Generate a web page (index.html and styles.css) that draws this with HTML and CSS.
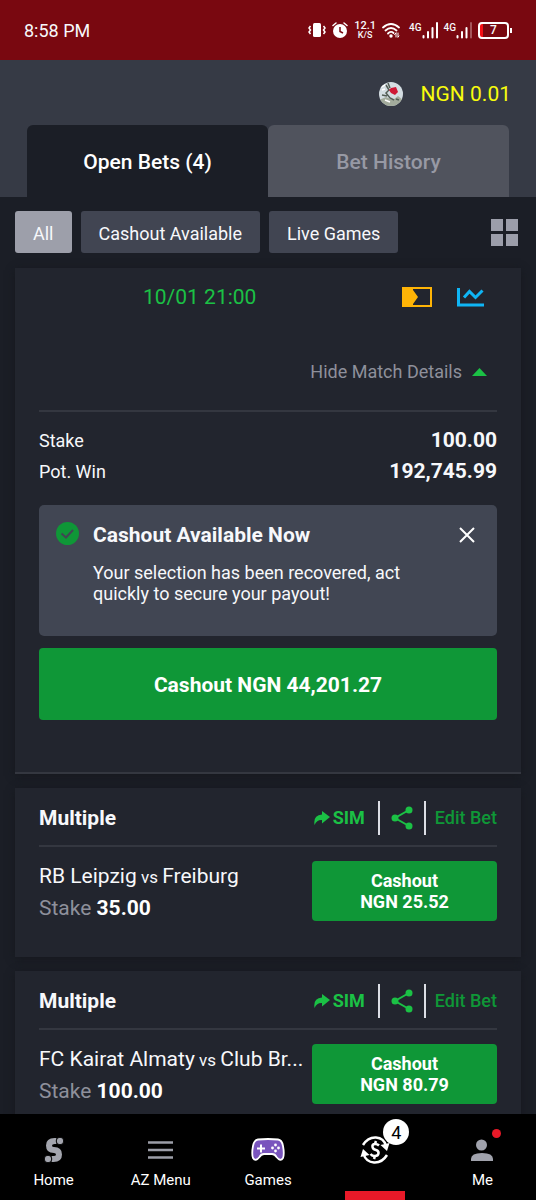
FILE: index.html
```html
<!DOCTYPE html>
<html lang="en">
<head>
<meta charset="utf-8">
<meta name="viewport" content="width=device-width, initial-scale=1">
<title>Open Bets</title>
<link rel="stylesheet" href="styles.css">
</head>
<body>
<svg class="defs" aria-hidden="true">
  <symbol id="forward" viewBox="0 0 16 14"><path d="M8 0l8 6-8 6.500V9Q3 8.500 .5 14Q-1 4 8 3.500z" fill="currentColor"/></symbol>
  <symbol id="share" viewBox="0 0 22 24"><path d="M18 4L4 12l14 8" fill="none" stroke="currentColor" stroke-width="2"/><g fill="currentColor"><circle cx="18" cy="4" r="3.500"/><circle cx="4" cy="12" r="3.500"/><circle cx="18" cy="20" r="3.500"/></g></symbol>
</svg>
<div class="app">
  <div class="status">
    <span class="clock">8:58 PM</span>
    <div class="indicators">
      <svg width="18" height="16" viewBox="0 0 18 16"><rect x="5" y="1" width="8" height="14" rx="1.500" fill="#fff"/><path d="M2.500 4L1 6l1.500 2L1 10l1.500 2M15.500 4L17 6l-1.500 2 1.500 2-1.500 2" fill="none" stroke="#fff" stroke-width="1.500"/></svg>
      <svg class="alarm" width="16" height="16" viewBox="0 0 16 16"><circle cx="8" cy="9" r="7" fill="#fff"/><path d="M8 5v4.500l3 1.500" fill="none" stroke="#790810" stroke-width="1.500"/><path d="M1 3.500L4 1M15 3.500L12 1" stroke="#fff" stroke-width="1.500" stroke-linecap="round"/></svg>
      <span class="speed"><b>12.1</b><small>K/S</small></span>
      <svg class="wifi" width="18" height="16" viewBox="0 0 18 16" fill="none" stroke="#fff" stroke-width="1.800" stroke-linecap="round"><path d="M1 5.500Q9-1.500 17 5.500M3.500 8.500Q9 3.500 14.500 8.500M6 11.500Q9 8.500 11.500 11"/><circle cx="9" cy="14" r=".8" fill="#fff"/><path d="M14 11v4M12.500 12.500L14 11M16 11v4M16 15l1-1" stroke-width="1"/></svg>
      <span class="signal"><span>4G</span><svg width="16" height="17" viewBox="0 0 16 17" stroke="#fff" stroke-width="2" stroke-linecap="round"><path d="M1.500 14v1.500M6 10v5.500M10.500 6v9.500M15 1v14.500"/></svg></span>
      <span class="signal"><span>4G</span><svg width="16" height="17" viewBox="0 0 16 17" stroke="#fff" stroke-width="2" stroke-linecap="round"><path d="M1.500 14v1.500M6 10v5.500M10.500 6v9.500"/><path d="M15 1v14.500" stroke="#a6565b"/></svg></span>
      <span class="battery">7</span>
    </div>
  </div>
  <header class="header">
    <div class="wallet">
      <svg width="24" height="24" viewBox="0 0 24 24"><clipPath id="av"><circle cx="12" cy="12" r="12"/></clipPath><g clip-path="url(#av)"><path fill="#d4dde2" d="M0 0h24v24H0z"/><path fill="#a3ab9c" d="M0 18l7-3 7 3 5-4 5 4v6H0z"/><path d="M7 3l3 5-3 3 4 5 4 2M9 1l2 5M3 13l5 1M17 17l3 1" fill="none" stroke="#535d55" stroke-width="1.500"/><path fill="#ce1835" d="M12 6l5-1 2 5-3 3-4-2-2-3z"/><path d="M2 5l4-2M3 8l3-1M6 18l5 2" stroke="#fff" stroke-width="1.500"/></g></svg>
      <span>NGN 0.01</span>
    </div>
    <div class="tabs">
      <button class="tab active">Open Bets (4)</button>
      <button class="tab">Bet History</button>
    </div>
  </header>
  <main class="content">
    <div class="filters">
      <button class="filter selected">All</button>
      <button class="filter">Cashout Available</button>
      <button class="filter">Live Games</button>
      <button class="plain layout" aria-label="Change layout"><svg width="27" height="27" viewBox="0 0 27 27" fill="#9c9eaa"><path d="M0 0h12v12H0zM15 0h12v12H15zM0 15h12v12H0zM15 15h12v12H15z"/></svg></button>
    </div>
    <article class="card detail">
      <div class="match">
        <time>10/01 21:00</time>
        <div class="match-icons">
          <svg width="30" height="20" viewBox="0 0 30 20"><path d="M1 1h28v18H1z" fill="none" stroke="#ffb406" stroke-width="2"/><path d="M1 1h10v2l5 7-5 7v2H1z" fill="#ffb406"/></svg>
          <svg width="28" height="20" viewBox="0 0 28 20" fill="none" stroke="#0fb5f5" stroke-width="3"><path d="M1.500 1v17H27M7 10.500l5.500-6 6 6 7-7"/></svg>
        </div>
      </div>
      <button class="plain toggle">Hide Match Details <svg width="15" height="8" viewBox="0 0 15 8"><path d="M0 8l7.500-8L15 8z" fill="#1bc145"/></svg></button>
      <dl class="totals">
        <div><dt>Stake</dt><dd>100.00</dd></div>
        <div><dt>Pot. Win</dt><dd>192,745.99</dd></div>
      </dl>
      <section class="notice">
        <svg width="23" height="23" viewBox="0 0 23 23"><circle cx="11.500" cy="11.500" r="11.500" fill="#0f9737"/><path d="M5.500 11.500l4.500 4 7-7.500" fill="none" stroke="#414653" stroke-width="2"/></svg>
        <div class="notice-text"><h2>Cashout Available Now</h2><p>Your selection has been recovered, act quickly to secure your payout!</p></div>
        <button class="plain close" aria-label="Close"><svg width="16" height="16" viewBox="0 0 16 16"><path d="M1 1l14 14M15 1L1 15" stroke="#fff" stroke-width="2"/></svg></button>
      </section>
      <button class="cashout wide">Cashout NGN 44,201.27</button>
    </article>
    <article class="card bet">
      <div class="bet-head">
        <h2>Multiple</h2>
        <div class="actions">
          <button class="plain sim"><svg width="16" height="14"><use href="#forward"/></svg>SIM</button>
          <button class="plain share" aria-label="Share"><svg width="22" height="24"><use href="#share"/></svg></button>
          <button class="plain edit">Edit Bet</button>
        </div>
      </div>
      <div class="bet-body">
        <div class="bet-info"><p class="teams">RB Leipzig<small> vs </small>Freiburg</p><p class="stake">Stake <b>35.00</b></p></div>
        <button class="cashout">Cashout<br>NGN 25.52</button>
      </div>
    </article>
    <article class="card bet">
      <div class="bet-head">
        <h2>Multiple</h2>
        <div class="actions">
          <button class="plain sim"><svg width="16" height="14"><use href="#forward"/></svg>SIM</button>
          <button class="plain share" aria-label="Share"><svg width="22" height="24"><use href="#share"/></svg></button>
          <button class="plain edit">Edit Bet</button>
        </div>
      </div>
      <div class="bet-body">
        <div class="bet-info"><p class="teams">FC Kairat Almaty<small> vs </small>Club Br...</p><p class="stake">Stake <b>100.00</b></p></div>
        <button class="cashout">Cashout<br>NGN 80.79</button>
      </div>
    </article>
  </main>
  <nav class="nav">
    <a href="#"><span class="icon"><svg width="20" height="26" viewBox="0 0 20 26"><path d="M12.500 4H10.500Q5 4 5 8.500t5 4.500 5 4.500-5.500 4.500H7.500" fill="none" stroke="#a3a5ae" stroke-width="6"/><g fill="#a3a5ae"><circle cx="16" cy="4" r="3.800" stroke="#000"/><circle cx="4" cy="22" r="3.800" stroke="#000"/></g></svg></span><span>Home</span></a>
    <a href="#"><span class="icon"><svg width="25" height="18" viewBox="0 0 25 18"><path d="M0 1.500h25M0 9h25M0 16.500h25" stroke="#9c9ea8" stroke-width="2.500"/></svg></span><span>AZ Menu</span></a>
    <a href="#"><span class="icon"><svg width="34" height="24" viewBox="0 0 34 24"><path d="M7 1.500Q17 .5 27 1.500Q31 2 32 8Q33.500 16 32 20Q29.500 24 25.500 19Q24 16 21 16h-8Q10 16 8.500 19Q4.500 24 2 20Q.5 16 2 8Q3 2 7 1.500z" fill="#7954bd" stroke="#fff" stroke-width="1.800"/><path d="M10 6.500v8M6 10.500h8" stroke="#fff" stroke-width="2"/><g fill="#fff"><circle cx="24.500" cy="7" r="1.400"/><circle cx="21.500" cy="10" r="1.400"/><circle cx="27.500" cy="10" r="1.400"/><circle cx="24.500" cy="13" r="1.400"/></g></svg></span><span>Games</span></a>
    <a href="#" class="current" aria-label="Open bets, 4"><span class="icon"><svg width="30" height="28" viewBox="0 0 30 28" fill="none" stroke="#fff" stroke-width="2.500"><path d="M3 9Q8 1 16 1.500Q24 2 26 10M27 19Q22 27 14 26.500Q6 26 3.500 18"/><path d="M20.500 9l9-2-2.500 8zM9.500 19l-9 2L3 13z" fill="#fff" stroke="none"/><path d="M19 9.500q-2-2-4.500-1.500t-2 3 3.500 3q3 1 2.500 3.500t-3.500 2.500-4.500-2M16 5l-1 3M15 20l-1 3" stroke-width="2.500"/></svg><span class="badge">4</span></span></a>
    <a href="#"><span class="icon"><svg width="22" height="22" viewBox="0 0 22 22" fill="#a0a2ac"><circle cx="10.500" cy="6" r="5.500"/><path d="M0 22v-2q0-6 11-6t11 6v2z"/></svg><span class="dot"></span></span><span>Me</span></a>
  </nav>
</div>
</body>
</html>
```
FILE: styles.css
```css
* { box-sizing: border-box; }
body { margin: 0; background: #1b1e26; color: #f7f8fb; font-family: Roboto, "Liberation Sans", sans-serif; font-size: 18px; }
h2, p, dl, dd { margin: 0; }
button { font: inherit; color: inherit; border: 0; cursor: pointer; }
svg { display: block; flex-shrink: 0; }
.defs { display: none; }
.plain { background: none; padding: 0; }
.app { height: 100vh; display: flex; flex-direction: column; }

.status { flex: none; height: 60px; padding: 0 27px 0 24px; background: #790810; display: flex; align-items: center; justify-content: space-between; }
.indicators { display: flex; align-items: center; gap: 6px; }
.speed { display: flex; flex-direction: column; align-items: center; font-size: 11px; line-height: 10px; }
.speed b { font-weight: 500; }
.speed small { font-size: 9px; line-height: 9px; font-weight: 500; }
.wifi { margin-right: 3px; }
.signal { display: flex; align-items: flex-end; }
.signal span { font-size: 10px; line-height: 12px; font-weight: 500; align-self: flex-start; }
.battery { position: relative; width: 31px; height: 17px; border: 2px solid #fff; border-radius: 4px; background: linear-gradient(90deg, #f50f14 3px, transparent 3px); font-size: 12px; line-height: 13px; font-weight: 500; text-align: center; }
.battery::after { content: ""; position: absolute; right: -5px; top: 4px; width: 2px; height: 5px; background: #fff; }

.header { flex: none; padding: 0 27px; background: #363a45; }
.wallet { height: 65px; padding-top: 2px; margin-right: -2px; display: flex; align-items: center; justify-content: flex-end; gap: 18px; color: #f8fc0d; font-size: 21px; }
.tabs { display: flex; }
.tab { flex: 1; height: 72px; padding: 2px 0 0; border-radius: 6px 6px 0 0; background: #50535d; color: #9799a4; font-size: 21px; font-weight: 500; }
.tab.active { background: #1b1e26; color: #fff; }

.content { flex: 1; min-height: 0; overflow: hidden; padding: 14px 15px 0; }
.filters { display: flex; align-items: center; gap: 9px; margin-bottom: 15px; }
.filter { height: 42px; padding: 2px 18px 0; border-radius: 3px; background: #414552; color: #f7f8fb; }
.filter.selected { background: #9d9faa; }
.layout { margin-left: auto; margin-right: 3px; }

.card { background: #22252e; padding: 0 24px; margin-bottom: 14px; box-shadow: 0 2px 8px #16181e; }
.detail { padding-bottom: 52px; border-bottom: 2px solid #343740; }
.match { height: 58px; display: flex; align-items: center; justify-content: space-between; padding: 0 12px 0 104px; color: #1bc145; font-size: 21px; }
.match-icons { display: flex; gap: 25px; }
.toggle { width: 100%; height: 86px; padding: 7px 10px 0 0; display: flex; align-items: center; justify-content: flex-end; gap: 10px; color: #8e909b; border-bottom: 2px solid #343740; }
.totals { padding: 13px 0 18px; }
.totals div { display: flex; justify-content: space-between; align-items: center; line-height: 31px; }
.totals dd { font-size: 21px; font-weight: 700; }
.notice { display: flex; align-items: flex-start; min-height: 131px; padding: 17px 22px 0 17px; border-radius: 5px; background: #414653; }
.notice-text { flex: 1; padding-left: 14px; }
.notice h2 { font-size: 21px; line-height: 26px; font-weight: 700; }
.notice p { margin-top: 14px; line-height: 21px; }
.close { margin-top: 5px; }
.cashout { width: 185px; height: 60px; flex: none; padding: 0; border-radius: 4px; background: #0f9737; color: #fff; font-weight: 700; line-height: 21px; }
.cashout.wide { width: 100%; height: 72px; margin-top: 12px; padding-top: 2px; font-size: 21px; }

.bet { padding-bottom: 33px; }
.bet-head { height: 59px; display: flex; align-items: center; justify-content: space-between; border-bottom: 2px solid #343740; padding-top: 2px; }
.bet-head h2 { font-size: 21px; font-weight: 700; }
.actions { display: flex; align-items: center; font-weight: 500; }
.sim { height: 34px; display: flex; align-items: center; gap: 3px; padding-right: 13px; color: #1bc145; font-weight: 700; }
.share { height: 34px; padding: 0 11px; border: solid #dcdee5; border-width: 0 2px; color: #1bc145; }
.edit { padding-left: 9px; color: #0f9737; font-weight: 500; }
.bet-body { display: flex; justify-content: space-between; padding-top: 14px; }
.bet-info { min-width: 0; font-size: 21px; line-height: 31px; }
.teams { white-space: nowrap; }
.teams small { font-size: 17px; }
.stake { color: #8e909b; }
.stake b { color: #fff; }

.nav { flex: none; height: 86px; display: flex; background: #000; }
.nav a { position: relative; flex: 1; display: flex; flex-direction: column; align-items: center; padding-top: 19px; color: #fff; text-decoration: none; font-size: 15px; line-height: 18px; }
.icon { position: relative; height: 34px; margin-bottom: 4px; display: flex; align-items: center; }
.current::after { content: ""; position: absolute; bottom: 0; width: 60px; height: 9px; background: #e91928; }
.badge { position: absolute; left: 23px; top: -14px; width: 26px; height: 26px; border-radius: 50%; background: #fff; color: #000; text-align: center; font-size: 18px; line-height: 27px; }
.dot { position: absolute; left: 21px; top: -4px; width: 9px; height: 9px; border-radius: 50%; background: #e91928; }
```
